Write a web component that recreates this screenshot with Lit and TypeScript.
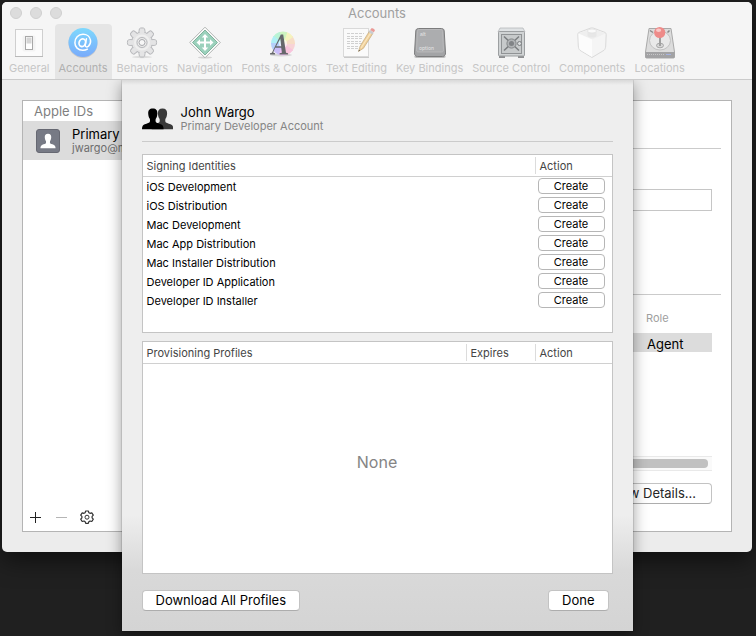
import { LitElement, html, css, svg } from "lit";
import { customElement, state } from "lit/decorators.js";
import { classMap } from "lit/directives/class-map.js";

const generalIcon = svg`
  <rect x="2.500" y="3.500" width="27" height="27" fill="#fbfbfb" stroke="#cfcfcf"/>
  <path d="M2 30.500h28" stroke="#b9b9b9"/>
  <rect x="9.500" y="9.500" width="13" height="16" rx="2" fill="#f3f3f3"/>
  <rect x="12.500" y="10.500" width="7" height="13" fill="#fff" stroke="#a8a8a8"/>
  <rect x="13.500" y="11.500" width="5" height="6" fill="#d6d6d6"/>`;

const accountsIcon = svg`
  <defs><linearGradient id="sky" x1="0" y1="0" x2="0" y2="1">
    <stop offset="0" stop-color="#7ed8fd"/><stop offset="1" stop-color="#79abfb"/>
  </linearGradient></defs>
  <circle cx="16" cy="17.500" r="14.500" fill="#000" opacity=".12"/>
  <circle cx="16" cy="16.500" r="14.500" fill="url(#sky)"/>
  <g fill="none" stroke="#fff" stroke-linecap="round">
    <ellipse cx="15.300" cy="16.700" rx="3.200" ry="3.900" stroke-width="1.700" transform="rotate(18 15.300 16.700)"/>
    <path d="M19.400 12.800l-1.100 6c-.3 2.600 1.800 2.500 3.200 1.300 1.500-1.400 2.400-3.400 2-5.900-.6-3.800-3.800-6-7.600-5.900-4.700.1-8 3.700-8 8.400 0 4.400 3.200 7.600 7.900 7.600 1.700 0 3.200-.3 4.600-1.100" stroke-width="1.500"/>
  </g>`;

const teeth = [0, 45, 90, 135, 180, 225, 270, 315];
const behaviorsIcon = svg`
  <ellipse cx="16" cy="31" rx="10" ry="1.200" fill="#ddd"/>
  <g fill="#e2e2e3" stroke="#b9babd" stroke-linejoin="round">
    ${teeth.map((a) => svg`<path d="M12.600 8l.8-5.200c.1-1.200 5.100-1.200 5.200 0L19.400 8z" transform="rotate(${a} 16 16.500)"/>`)}
    <circle cx="16" cy="16.500" r="10.300"/>
  </g>
  ${teeth.map((a) => svg`<path d="M13.400 9l.7-5.800h3.800l.7 5.800z" fill="#e4e4e5" transform="rotate(${a} 16 16.500)"/>`)}
  <circle cx="16" cy="16.500" r="9.700" fill="#e4e4e5"/>
  <circle cx="16" cy="16.500" r="7" fill="none" stroke="#efefef" stroke-width="2"/>
  <circle cx="16" cy="16.500" r="5" fill="#ececec" stroke="#b8b9bc"/>
  <circle cx="16" cy="16.500" r="3" fill="#f7f7f7" stroke="#a9aaae"/>`;

const navigationIcon = svg`
  <ellipse cx="16" cy="31.500" rx="7" ry="1" fill="#d4d4d4"/>
  <path d="M16 1.200L31.300 16.500 16 31.800.7 16.500z" fill="#fdfdfd" stroke="#b0b4b2"/>
  <path d="M16 4L28.500 16.500 16 29 3.500 16.500z" fill="#9bd1bc" stroke="#82b29d"/>
  <g stroke="#fff" stroke-width="2" fill="none"><path d="M16 10v13M9.500 16.500h13"/></g>
  <path d="M16 8l3.300 3.500h-6.600zM16 25l-3.300-3.500h6.600zM7.500 16.500l3.500-3.300v6.600zM24.500 16.500l-3.500-3.300v6.600z" fill="#fff"/>`;

const hues = ["#f8d3d6", "#f7ddc6", "#f5f3bd", "#cdf3bf", "#b9f3d4", "#aeeff5", "#b5d0fa", "#c9bdf8", "#efc0f3", "#f8c4dc"];
const fontsIcon = svg`
  <ellipse cx="18" cy="29" rx="11" ry="1.500" fill="#d6d6d6"/>
  <g transform="translate(20 17.500)">
    ${hues.map((c, i) => svg`<path d="M0 0L-3.600 -10.900A11.500 11.500 0 0 1 3.600 -10.900z" fill="${c}" stroke="${c}" transform="rotate(${108 - i * 36})"/>`)}
    <circle r="4" fill="#fff" opacity=".6"/>
  </g>
  <path d="M17.800 8.500h2.400l2.800 18.300 2 .5v1.200h-8.500v-1.200l2.400-.5-.7-5h-6l-2 4.800 1.900.7v1.200H7v-1.200l1.900-.6zM17.300 12.500l-4.100 7.700h5z" fill="#66676b" fill-rule="evenodd"/>`;

const textIcon = svg`
  <path d="M3 31.500h25" stroke="#c9c9c9"/>
  <rect x="2.500" y="2.500" width="25" height="28" fill="#fafafa" stroke="#d9d9d9"/>
  ${[7, 10, 12, 15, 17, 20, 22].map((y, i) => svg`<path d="M6 ${y}.5h${[17, 15, 16, 14, 15, 12, 11][i]}" stroke="#d0d0d0" stroke-dasharray="3 1"/>`)}
  <path d="M17.500 25.500l1.600-5.300L28.500 5l3.500 2.200-9.500 15z" fill="#f0d09a" stroke="#c3aa80" stroke-width=".7"/>
  <path d="M20 22L30 6.500" stroke="#fae7c0" stroke-width="1.200"/>
  <path d="M27.800 6.200l1.300-2.100 3.500 2.200-1.300 2.100z" fill="#c9ccd0"/>
  <path d="M29.200 4l1-1.500c.8-1.200 4.400.9 3.600 2.300l-1 1.500z" fill="#ea9a96"/>
  <path d="M17.500 25.500l.5-1.800 1 .7z" fill="#444"/>`;

const keyIcon = svg`
  <path d="M3.300 29.500h25.400l3 .8c.3 1.200-1 1.700-2 1.700H2.300c-1 0-2.300-.5-2-1.700z" fill="#bdbdbd"/>
  <path d="M4.500 2.500h23c1.500 0 2.600.8 2.700 2.400l1.300 22c.1 2-.9 3.600-3 3.600h-25c-2.100 0-3.100-1.600-3-3.600l1.300-22c.1-1.600 1.200-2.400 2.700-2.400z" fill="#a3a4a6" stroke="#7c7c7d"/>
  <path d="M5.500 3.500h21c1.300 0 2 .6 2.100 2l.9 18.300c.1 1.500-.6 2.200-2 2.200h-23c-1.400 0-2.100-.7-2-2.200l.9-18.300c.1-1.400.8-2 2.100-2z" fill="#acadaf" stroke="#bcbdbe" stroke-width=".8"/>
  <text x="6" y="10" class="cap">alt</text>
  <text x="5" y="24" class="cap">option</text>`;

const safeIcon = svg`
  <path d="M4 29h6v3H4zM23 29h6v3h-6z" fill="#8e8f91"/>
  <path d="M5 2h23l2 4H3z" fill="#dfe2e4" stroke="#b0b3b6" stroke-width=".7"/>
  <rect x="3.500" y="5.500" width="26" height="24.500" rx="1" fill="#d0d3d4" stroke="#9c9fa1"/>
  <rect x="6.500" y="8.500" width="20" height="19" fill="#c7cacb" stroke="#909395"/>
  <path d="M9 10.500l15 14M24 10.500l-15 14" stroke="#7b7e80" stroke-width="1.500"/>
  <circle cx="16.500" cy="17.500" r="4.600" fill="#b0b3b5" stroke="#85888a"/>
  <circle cx="16.500" cy="17.500" r="2.500" fill="#808386"/>
  <circle cx="24.500" cy="17.500" r="2" fill="#d9dcdd" stroke="#7a7d80"/>`;

const componentsIcon = svg`
  <path d="M16 31.500L4 24.300C3 23.500 2.500 22 2.300 20L1.800 8.300c0-1 .5-1.500 1.300-1.900L14 2.300c1.300-.5 2.700-.5 4 0l10.900 4.100c.8.400 1.300.9 1.300 1.900L29.700 20c-.2 2-.7 3.500-1.700 4.300z" fill="#f5f5f5" stroke="#dadada"/>
  <path d="M2.500 7.500L16 13.500l13.500-6L18 3c-1.300-.5-2.700-.5-4 0z" fill="#efefef"/>
  <path d="M16 13.500V31L4.500 24c-1-.8-1.400-2-1.500-4L2.500 7.500z" fill="#fcfcfc"/>
  <path d="M11.500 5v4.500c0 2.700 9 2.700 9 0V5z" fill="#e7e7e7"/>
  <ellipse cx="16" cy="5" rx="4.500" ry="2" fill="#fafafa" stroke="#dedede" stroke-width=".7"/>`;

const locationsIcon = svg`
  <path d="M5 2.500h22L30.500 26v5c0 .6-.4 1-1 1h-27c-.6 0-1-.4-1-1v-5z" fill="#dcdcdc" stroke="#a9a9a9"/>
  <path d="M1.500 26h29v5c0 .6-.4 1-1 1h-27c-.6 0-1-.4-1-1z" fill="#a2a2a4"/>
  <path d="M3 28.500h18" stroke="#c6c6c8" stroke-dasharray="1 1"/>
  <path d="M22 28.500h5" stroke="#a6b3e0"/>
  <ellipse cx="16" cy="14.500" rx="10.500" ry="9.500" fill="#e9e9e9" stroke="#c2c2c2"/>
  <ellipse cx="16" cy="19.500" rx="3.500" ry="2.300" fill="#d6d6d6" stroke="#a8a8a8"/>
  <path d="M6 4.500l3 2M25.500 4.500l-2 2" stroke="#888" stroke-width="1.500"/>
  <path d="M16 10v10" stroke="#a0a0a0" stroke-width="2"/>
  <circle cx="15.700" cy="6.500" r="5.600" fill="#ee8b89"/>
  <ellipse cx="14.600" cy="4.300" rx="2.600" ry="1.700" fill="#f9c9c8"/>`;

const tabs = [
  { label: "General", icon: generalIcon },
  { label: "Accounts", icon: accountsIcon },
  { label: "Behaviors", icon: behaviorsIcon },
  { label: "Navigation", icon: navigationIcon },
  { label: "Fonts & Colors", icon: fontsIcon },
  { label: "Text Editing", icon: textIcon },
  { label: "Key Bindings", icon: keyIcon },
  { label: "Source Control", icon: safeIcon },
  { label: "Components", icon: componentsIcon },
  { label: "Locations", icon: locationsIcon },
];

const identities = [
  "iOS Development",
  "iOS Distribution",
  "Mac Development",
  "Mac App Distribution",
  "Mac Installer Distribution",
  "Developer ID Application",
  "Developer ID Installer",
];

// Head and shoulders on a flat base, shared by the badge and the sheet header.
const person = "M10 0.500c3.400 0 4.700 2 4.600 5-.1 2.200-.6 4-1.600 5.200-.4 1.500-.3 3 .4 3.700 1.200.9 4.600 1.400 6 2.600 1 .9 1.400 2.200 1.400 4.200H-.8c0-2 .4-3.300 1.400-4.200 1.400-1.200 4.800-1.700 6-2.600.7-.7.8-2.200.4-3.700-1-1.200-1.500-3-1.600-5.200-.1-3 1.200-5 4.600-5z";

@customElement("app-root")
export class AppRoot extends LitElement {
  @state() private active = "Accounts";

  static styles = css`
    * { box-sizing: border-box; }
    :host {
      display: grid;
      grid-template-columns: minmax(0, 1fr);
      align-items: start;
      min-height: 100vh;
      padding: 2px 4px 5px 2px;
      background: #202020;
      color: #000;
      font: 11px/14px Inter, "Liberation Sans", sans-serif;
    }
    button, input { font: inherit; color: inherit; margin: 0; padding: 0; }
    .window, .sheet { grid-area: 1 / 1; }
    .window {
      border-radius: 5px;
      overflow: hidden;
      background: #ececec;
      box-shadow: 0 8px 24px #0008;
    }
    .top { background: #f5f5f5; border-bottom: 1px solid #cbcbcb; }
    .titlebar {
      display: grid;
      grid-template-columns: 1fr auto 1fr;
      align-items: center;
      height: 22px;
      padding: 0 8px;
    }
    .lights { display: flex; gap: 8px; }
    .light {
      width: 12px;
      height: 12px;
      border: 1px solid #cfcfcf;
      border-radius: 50%;
      background: #dcdcdc;
    }
    .title { margin: 0; font-size: 13px; font-weight: 400; line-height: 22px; color: #a0a0a0; }
    .toolbar { display: flex; gap: 1px; padding: 0 3px; }
    .tab {
      display: flex;
      flex-direction: column;
      align-items: center;
      gap: 1px;
      height: 55px;
      padding: 2px 4px 0;
      border: 0;
      border-radius: 4px 4px 0 0;
      background: none;
      color: #c6c6c6;
      white-space: nowrap;
    }
    .tab.on { background: #e5e5e5; color: #b0b0b0; }
    .tab svg { width: 32px; height: 34px; overflow: visible; }
    .cap { font: 5px Inter, sans-serif; fill: #e6e6e6; }
    .panel {
      display: grid;
      grid-template-columns: 180px minmax(0, 1fr);
      min-height: 432px;
      margin: 20px;
      border: 1px solid #b4b4b4;
      background: #fff;
    }
    .side { display: flex; flex-direction: column; }
    .caption {
      margin: 0;
      padding: 0 11px;
      font-size: 13px;
      font-weight: 400;
      line-height: 20px;
      color: #7f7f7f;
    }
    .account {
      display: flex;
      align-items: center;
      gap: 12px;
      height: 39px;
      padding: 0 13px;
      background: #dcdcdc;
    }
    .badge { width: 24px; height: 24px; flex: none; }
    .big { font-size: 13px; line-height: 14px; }
    .muted { color: #6e6e6e; }
    .tools { display: flex; gap: 10px; margin-top: auto; padding: 0 4px 6px; }
    .tool { display: flex; width: 16px; height: 16px; border: 0; background: none; }
    .detail { display: flex; flex-direction: column; padding: 47px 10px 27px 20px; }
    .line { width: 100%; height: 1px; margin: 0; border: 0; background: #cbcbcb; flex: none; }
    .field {
      height: 22px;
      margin: 40px 9px 83px 0;
      border: 1px solid #c6c6c6;
      background: #fff;
    }
    .teams { margin: 15px 9px 0 0; border-collapse: collapse; }
    .teams th { height: 23px; padding: 0 0 7px; font-weight: 400; text-align: left; color: #a0a0a0; }
    .teams td { height: 19px; padding: 2px 0 0 1px; font-size: 13px; background: #dcdcdc; }
    .role { width: 66px; }
    .scroll {
      margin: auto 9px 12px 0;
      padding: 2px 4px;
      border: 1px solid #e9e9e9;
      border-width: 1px 0;
      background: #fafafa;
    }
    .thumb { height: 9px; border-radius: 4px; background: #c1c1c1; }
    .btn {
      height: 21px;
      padding: 0 13px;
      border: 1px solid #c3c3c3;
      border-bottom-color: #adadad;
      border-radius: 4px;
      background: #fff;
      font-size: 13px;
      line-height: 19px;
      white-space: nowrap;
    }
    .view { align-self: flex-end; margin-right: 9px; padding: 0 15px; color: #262626; }
    .sheet {
      display: flex;
      flex-direction: column;
      justify-self: center;
      width: 68%;
      min-width: 511px;
      margin-top: 78px;
      padding: 25px 20px 20px;
      background: linear-gradient(#d9d9d9, #eee 5px, #eee 435px, #d9d9d9 490px, #d4d4d4);
      box-shadow: 0 0 1px #0008, 0 4px 14px #0006;
      z-index: 1;
      clip-path: inset(0 -30px -30px -30px);
    }
    .who { display: flex; align-items: center; gap: 8px; height: 28px; margin-bottom: 8px; }
    .people { width: 31px; height: 24px; }
    .gray { color: #858585; }
    .box { border: 1px solid #c4c4c4; background: #fff; }
    .box.ids { height: 179px; margin: 12px 0 8px; }
    .box.profiles { display: flex; flex-direction: column; height: 233px; margin-bottom: 16px; }
    .grid { width: 100%; table-layout: fixed; border-collapse: separate; border-spacing: 0; }
    .grid th {
      height: 22px;
      padding: 0 4px;
      border-bottom: 1px solid #d0d0d0;
      font-weight: 400;
      text-align: left;
      color: #454545;
    }
    .grid td { height: 19px; padding: 0 4px; }
    .grid .split {
      padding-left: 5px;
      background: linear-gradient(#dcdcdc, #dcdcdc) 0 50% / 1px 17px no-repeat;
    }
    .act { width: 77px; }
    .exp { width: 69px; }
    .grid td.cell { padding: 1px 7px 2px 3px; }
    .create {
      display: block;
      width: 100%;
      height: 16px;
      border: 1px solid #b6b6b6;
      border-radius: 4px;
      background: #fff;
      line-height: 14px;
    }
    .none { margin: auto; padding-bottom: 14px; font-size: 16px; line-height: 20px; color: #858585; }
    .actions { display: flex; justify-content: space-between; padding-right: 4px; }
  `;

  render() {
    return html`
      <main class="window">
        <header class="top">
          <div class="titlebar">
            <div class="lights"><span class="light"></span><span class="light"></span><span class="light"></span></div>
            <h1 class="title">Accounts</h1>
          </div>
          <nav class="toolbar">
            ${tabs.map((t) => html`
              <button class=${classMap({ tab: true, on: t.label === this.active })} @click=${() => (this.active = t.label)}>
                <svg viewBox="0 0 32 34" aria-hidden="true">${t.icon}</svg>
                <span>${t.label}</span>
              </button>`)}
          </nav>
        </header>
        <div class="panel">
          <section class="side">
            <h2 class="caption">Apple IDs</h2>
            <div class="account">
              <svg class="badge" viewBox="0 0 24 24" aria-hidden="true">
                <rect x=".5" y=".5" width="23" height="23" rx="2.500" fill="#777a85" stroke="#666872"/>
                <path d="${person}" transform="translate(5 4.500) scale(.7)" fill="#fff"/>
              </svg>
              <div>
                <div class="big">Primary</div>
                <div class="muted">jwargo@me</div>
              </div>
            </div>
            <div class="tools">
              <button class="tool" aria-label="Add"><svg viewBox="0 0 16 16"><path d="M3 8.500h11M8.500 3v11" stroke="#222" fill="none"/></svg></button>
              <button class="tool" aria-label="Remove"><svg viewBox="0 0 16 16"><path d="M3 8.500h11" stroke="#b5b5b5"/></svg></button>
              <button class="tool" aria-label="Settings"><svg viewBox="0 0 16 16" fill="none" stroke="#333">
                <path d="M6.700 2h2.600l.6 1.700 1.100.6 1.800-.5 1.500 2.300-1.200 1.300v1.500l1.200 1.300-1.500 2.300-1.800-.5-1.100.6L9.300 14.300H6.700l-.6-1.700-1.100-.6-1.800.5-1.500-2.300 1.200-1.300V7.400L1.700 6.100l1.500-2.300 1.800.5 1.100-.6z" stroke-width="1.200" stroke-linejoin="round"/>
                <circle cx="8" cy="8.200" r="2"/></svg></button>
            </div>
          </section>
          <section class="detail">
            <hr class="line" />
            <input class="field" aria-label="Description" />
            <hr class="line" />
            <table class="teams">
              <thead><tr><th></th><th class="role">Role</th></tr></thead>
              <tbody><tr><td></td><td>Agent</td></tr></tbody>
            </table>
            <div class="scroll"><div class="thumb"></div></div>
            <button class="btn view">View Details...</button>
          </section>
        </div>
      </main>
      <section class="sheet" role="dialog" aria-label="John Wargo">
        <div class="who">
          <svg class="people" viewBox="0 0 31 24" aria-hidden="true">
            <path d="${person}" transform="translate(10.500 1)" fill="#3a3a3a"/>
            <path d="${person}" transform="translate(.800 1)" fill="#000"/>
          </svg>
          <div>
            <div class="big">John Wargo</div>
            <div class="gray">Primary Developer Account</div>
          </div>
        </div>
        <hr class="line" />
        <div class="box ids">
          <table class="grid">
            <thead><tr><th>Signing Identities</th><th class="act split">Action</th></tr></thead>
            <tbody>
              ${identities.map((name) => html`<tr><td>${name}</td><td class="cell"><button class="create">Create</button></td></tr>`)}
            </tbody>
          </table>
        </div>
        <div class="box profiles">
          <table class="grid">
            <thead><tr><th>Provisioning Profiles</th><th class="exp split">Expires</th><th class="act split">Action</th></tr></thead>
          </table>
          <div class="none">None</div>
        </div>
        <div class="actions">
          <button class="btn">Download All Profiles</button>
          <button class="btn">Done</button>
        </div>
      </section>
    `;
  }
}
